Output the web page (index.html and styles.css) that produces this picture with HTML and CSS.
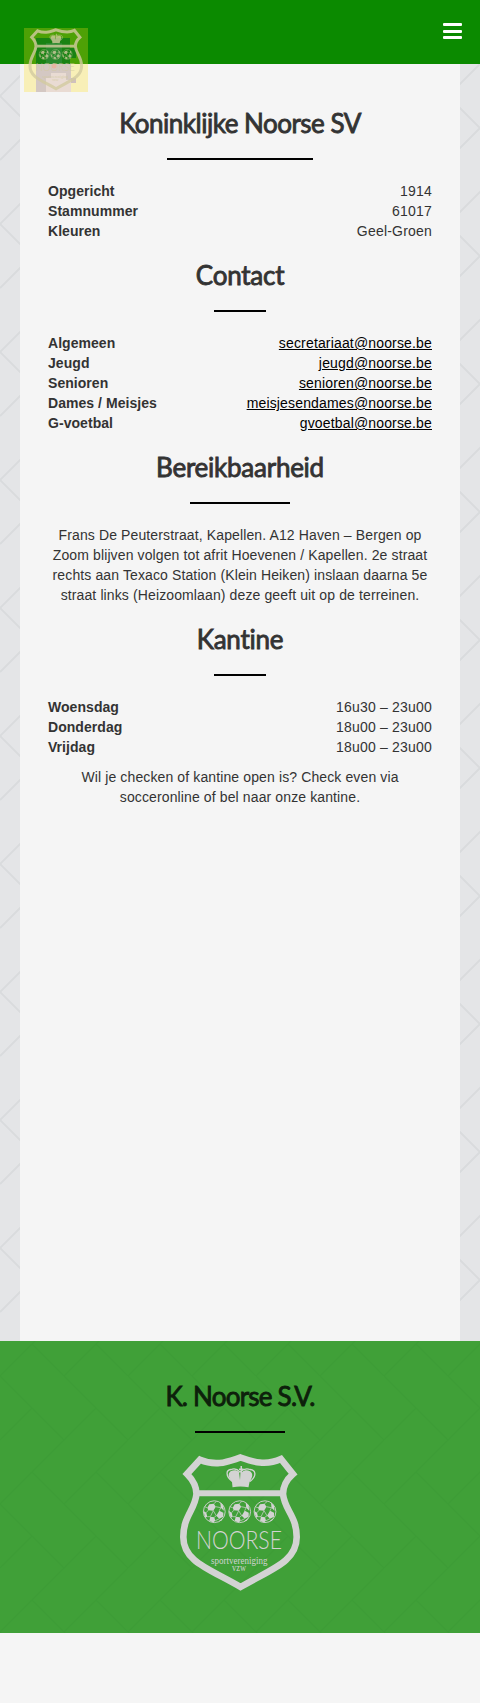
FILE: index.html
```html
<!DOCTYPE html>
<html lang="nl">
<head>
<meta charset="utf-8">
<title>Koninklijke Noorse SV</title>
<link rel="stylesheet" href="styles.css">
</head>
<body>
<svg class="defs" width="0" height="0" aria-hidden="true">
  <defs>
    <path id="bricks" fill="none" d="M0 0 64 64M64 0 128 64M32 96 64 128M96 96 128 128M96 32 0 128M32 32 0 64M128 64 64 128"/>
    <g id="ball">
      <circle r="10.9" fill="none" stroke="currentColor" stroke-width=".9"/>
      <path fill="currentColor" d="M-5-7.500-.5-8 1.500-5-1-1-6-1.500-7-4ZM6-9.500 9-6 9.500-1 6.500-4ZM5-1 9 1 9 5 5 7 2 4ZM-11-1-8 1-7 5-9 6ZM-4 5 0 5.500 1 9-1 10.800-5 9ZM4 10 7 7.500 9 6 7 9Z"/>
      <path fill="none" stroke="currentColor" stroke-width=".7" d="M1.500-5 6.500-4 5-1M-1-1 2 4 0 5.500M-6-1.500-8 1M-7 5-4 5-1-1M1 9 5 7M-.5-8 2-10M-7-4-10-5"/>
    </g>
    <g id="crest">
      <path fill="none" stroke="currentColor" stroke-width="6.600" d="M60.500 3.500C49 7 37 13 20 5.700L7 20C14 27 16.500 33 16.500 40C15 56 3.300 62 3.300 83C3.300 108 30 115 60.500 133C91 115 116.700 108 116.700 83C116.700 62 104.500 56 103 40C103 33 105 27 113 20L101 5C86 12 73 8 60.500 3.500Z"/>
      <path stroke="currentColor" stroke-width="6" d="M16 39.300H103"/>
      <path fill="currentColor" d="M60.500 12h1.500v2.500h1.500v1.500h-1.500v2.200c2-2 5-2.500 8-1c3 2 2.500 5 1.500 7l-2 4-1 5q-8-1.500-16 0L52 28l-2.500-4c-1-2-1.500-5 1.500-7c3-1.500 6-1 8 1l1 8 .5-8v-2h-1.500v-1.500h1.500Z"/>
      <path fill="none" stroke="currentColor" stroke-width="1.300" d="M52.500 27.500C45 22 46 16 51 15.500q5-2 9 2.500q5-4.500 10-2.500c6 .5 7 6.500 0 12"/>
      <use href="#ball" x="34.300" y="57.700"/>
      <use href="#ball" x="59.700" y="57.700"/>
      <use href="#ball" x="85" y="57.700"/>
      <text class="crest-name" x="16" y="95" textLength="86" lengthAdjust="spacingAndGlyphs">NOORSE</text>
      <text class="crest-sub" x="31" y="110.300" textLength="56.500" lengthAdjust="spacingAndGlyphs">sportvereniging</text>
      <text class="crest-sub" x="52" y="117" textLength="14" lengthAdjust="spacingAndGlyphs">vzw</text>
    </g>
  </defs>
</svg>

<header class="topbar">
  <a class="brand" href="#" aria-label="Noorse">
    <svg width="64" height="64" viewBox="0 0 64 64">
      <rect class="brand-bg" width="64" height="64"/>
      <path fill="#087818" opacity=".75" d="M12 10H46V20H52V30H46V36H12Z"/>
      <path fill="#3b8f4a" opacity=".5" d="M22 15H38V36H22Z"/>
      <path class="brand-photo" d="M12 36H47V64H12Z"/>
      <path fill="#e9dbd3" d="M27 45H42V52H47V64H22V50H27Z"/>
      <path fill="#cfc0bd" d="M47 50H52V55H47Z"/>
      <circle cx="30" cy="38" r="2.500" fill="#e8b5a2"/>
      <use class="brand-crest" href="#crest" transform="translate(4.500 .2) scale(.455)"/>
    </svg>
  </a>
  <button class="menu" aria-label="Menu"><span></span><span></span><span></span></button>
</header>

<main class="page">
  <svg class="weave" width="100%" height="100%" aria-hidden="true">
    <defs>
      <pattern id="weave-light" width="128" height="128" patternUnits="userSpaceOnUse" patternTransform="translate(0 32)">
        <use href="#bricks" stroke="#d9dbdd" stroke-width="1.900"/>
      </pattern>
    </defs>
    <rect width="100%" height="100%" fill="url(#weave-light)"/>
  </svg>
  <div class="content">
    <h1 class="heading heading-main"><span>Koninklijke Noorse SV</span></h1>
    <dl class="list list-figures">
      <dt>Opgericht</dt><dd>1914</dd>
      <dt>Stamnummer</dt><dd>61017</dd>
      <dt>Kleuren</dt><dd>Geel-Groen</dd>
    </dl>
    <h2 class="heading"><span>Contact</span></h2>
    <dl class="list">
      <dt>Algemeen</dt><dd><a href="#">secretariaat@noorse.be</a></dd>
      <dt>Jeugd</dt><dd><a href="#">jeugd@noorse.be</a></dd>
      <dt>Senioren</dt><dd><a href="#">senioren@noorse.be</a></dd>
      <dt>Dames / Meisjes</dt><dd><a href="#">meisjesendames@noorse.be</a></dd>
      <dt>G-voetbal</dt><dd><a href="#">gvoetbal@noorse.be</a></dd>
    </dl>
    <h2 class="heading"><span>Bereikbaarheid</span></h2>
    <p class="text">Frans De Peuterstraat, Kapellen. A12 Haven – Bergen op Zoom blijven volgen tot afrit Hoevenen / Kapellen. 2e straat rechts aan Texaco Station (Klein Heiken) inslaan daarna 5e straat links (Heizoomlaan) deze geeft uit op de terreinen.</p>
    <h2 class="heading"><span>Kantine</span></h2>
    <dl class="list list-figures">
      <dt>Woensdag</dt><dd>16u30 – 23u00</dd>
      <dt>Donderdag</dt><dd>18u00 – 23u00</dd>
      <dt>Vrijdag</dt><dd>18u00 – 23u00</dd>
    </dl>
    <p class="text note">Wil je checken of kantine open is? Check even via socceronline of bel naar onze kantine.</p>
  </div>
</main>

<footer class="footer">
  <svg class="weave" width="100%" height="100%" aria-hidden="true">
    <defs>
      <pattern id="weave-green" width="128" height="128" patternUnits="userSpaceOnUse" patternTransform="translate(0 35)">
        <use href="#bricks" stroke="#3d9d36" stroke-width="1.500"/>
      </pattern>
    </defs>
    <rect width="100%" height="100%" fill="url(#weave-green)"/>
  </svg>
  <h2 class="heading"><span>K. Noorse S.V.</span></h2>
  <svg class="crest" width="120" height="137" viewBox="0 0 120 137"><use href="#crest"/></svg>
</footer>
</body>
</html>
```
FILE: styles.css
```css
* { box-sizing: border-box; }

body {
  margin: 0;
  min-height: 1703px;
  background: #f5f5f5;
  color: #333;
  font: 14px/20px "Liberation Sans", Arial, sans-serif;
}

.defs { position: absolute; }

.topbar {
  display: flex;
  justify-content: space-between;
  height: 64px;
  padding: 0 18px 0 24px;
  background: #0b8a00;
}

.brand {
  position: relative;
  z-index: 1;
  width: 64px;
  height: 64px;
  margin-top: 28px;
}
.brand svg { display: block; }
.brand-bg { fill: #ffdd15; opacity: 0.28; }
.brand-photo { fill: #d4c8c3; }
.brand-crest { color: #d3cba0; opacity: 0.8; }

.menu {
  display: flex;
  flex-direction: column;
  gap: 3.6px;
  width: 19px;
  margin: 23px 0 0;
  padding: 0;
  border: 0;
  background: none;
}
.menu span {
  flex: none;
  width: 19px;
  height: 3px;
  border-radius: 1px;
  background: #fff;
}

.page {
  position: relative;
  height: 1277px;
  padding: 0 20px;
  background: #e4e5e7;
}

.content {
  position: relative;
  height: 100%;
  padding: 25px 28px 0;
  background: #f5f5f5;
}

.heading {
  margin: 0;
  padding-top: 18px;
  color: #333;
  font: 400 26px/32px Lato, sans-serif;
  letter-spacing: -0.25px;
  text-align: center;
  -webkit-text-stroke: 0.85px currentColor;
}
.heading-main { letter-spacing: -0.5px; }
.heading span { display: inline-block; vertical-align: top; }
.heading span::after {
  content: "";
  display: block;
  width: 59.5%;
  height: 2px;
  margin: 19px auto 21px;
  background: #000;
}
.heading-main span::after { width: 60%; }

.list {
  display: grid;
  grid-template-columns: auto 1fr;
  margin: 0;
}
.list dt { font-weight: 700; letter-spacing: 0.05px; }
.list dd { margin: 0; text-align: right; letter-spacing: 0.16px; }
.list-figures dd { letter-spacing: 0.2px; }
.list a { color: #000; }

.text { margin: 0; text-align: center; letter-spacing: 0.12px; }
.note { padding: 10px 20px 0; }

.footer {
  position: relative;
  height: 292px;
  padding-top: 21px;
  background: #40a038;
  text-align: center;
}
.weave { position: absolute; inset: 0; }
.footer .heading { position: relative; color: #0d200b; letter-spacing: -0.78px; }
.footer .heading span::after { width: 60.5%; }
.crest { position: relative; display: block; margin: 0 auto; color: #d3d3d3; }

.crest-name { fill: currentColor; font: 300 24.5px Lato, sans-serif; }
.crest-sub { fill: currentColor; font: 9.5px "Liberation Serif", serif; }
```
